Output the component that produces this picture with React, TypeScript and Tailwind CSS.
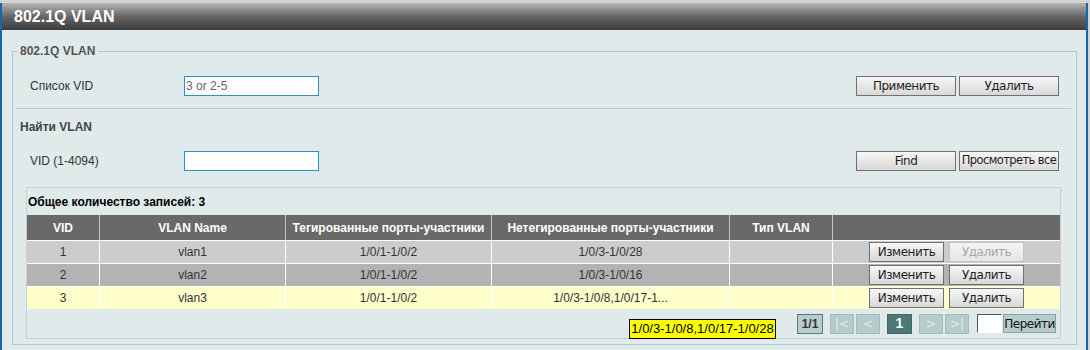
import React from "react";

const arial = "font-['Liberation_Sans',Arial,sans-serif]";
const tahoma = "font-['DejaVu_Sans',Tahoma,sans-serif]";

const btn =
  "h-[20px] w-[100px] border border-[#707070] bg-gradient-to-b from-[#f7f7f7] to-[#d8d8d8] text-[12px] text-[#1e1e1e] tracking-[-0.5px] leading-none flex items-center justify-center font-['DejaVu_Sans',Tahoma,sans-serif]";
const rowBtn =
  "h-[20px] w-[75px] border border-[#707070] bg-gradient-to-b from-[#f7f7f7] to-[#d8d8d8] text-[12px] text-[#1e1e1e] tracking-[-0.5px] leading-none flex items-center justify-center font-['DejaVu_Sans',Tahoma,sans-serif]";
const rowBtnDisabled =
  "h-[20px] w-[75px] border border-[#c4c4c4] bg-gradient-to-b from-[#f3f3f3] to-[#e6e6e6] text-[12px] text-[#a8a8a8] tracking-[-0.5px] leading-none flex items-center justify-center font-['DejaVu_Sans',Tahoma,sans-serif]";

type Row = {
  vid: string;
  name: string;
  tagged: string;
  untagged: string;
  type: string;
  bg: string;
  disabled?: boolean;
};

const rows: Row[] = [
  { vid: "1", name: "vlan1", tagged: "1/0/1-1/0/2", untagged: "1/0/3-1/0/28", type: "", bg: "bg-[#cccccc]", disabled: true },
  { vid: "2", name: "vlan2", tagged: "1/0/1-1/0/2", untagged: "1/0/3-1/0/16", type: "", bg: "bg-[#b3b3b3]" },
  { vid: "3", name: "vlan3", tagged: "1/0/1-1/0/2", untagged: "1/0/3-1/0/8,1/0/17-1...", type: "", bg: "bg-[#ffffcc]" },
];

const cell = "flex items-center justify-center h-full";

export default function App() {
  return (
    <div className={`w-[1090px] h-[350px] overflow-hidden bg-[#d4d4d4] ${arial}`}>
      <div className="mt-[3px] w-[1088px] h-[347px] border-x-2 border-[#1766a6] bg-[#e1eaea] flex flex-col">
        {/* Title bar */}
        <div className="h-[27px] shrink-0 bg-gradient-to-b from-[#b8b8b8] via-[#666666] to-[#3c3c3c] flex items-center pl-[12px]">
          <span className="text-white font-bold text-[16px] leading-none">802.1Q VLAN</span>
        </div>

        <fieldset className="mt-[14px] ml-[10px] mr-[9px] border border-[#b3c9c9] pb-[5px]">
          <legend className="ml-[4px] px-[3px] text-[12px] leading-[14px] font-bold text-[#555]">802.1Q VLAN</legend>

          {/* VID list row */}
          <div className="mt-[18px] flex items-center h-[20px] pr-[17px]">
            <div className="w-[171px] pl-[17px] text-[12px] text-[#333]">Список VID</div>
            <div className="w-[135px] h-[20px] border border-[#2f8fc2] bg-white flex items-center pl-[1px] text-[12px] text-[#666]">
              3 or 2-5
            </div>
            <div className="ml-auto flex gap-[3px]">
              <button className={btn}>Применить</button>
              <button className={btn}>Удалить</button>
            </div>
          </div>

          <div className="mt-[12px] ml-[3px] mr-[5px] h-px bg-[#b6cdcd]" />

          <div className="mt-[11px] pl-[7px] text-[12px] leading-[14px] font-bold text-[#444]">Найти VLAN</div>

          {/* Find row */}
          <div className="mt-[17px] flex items-center h-[20px] pr-[17px]">
            <div className="w-[171px] pl-[17px] text-[12px] text-[#333]">VID (1-4094)</div>
            <div className="w-[135px] h-[20px] border border-[#2f8fc2] bg-white" />
            <div className="ml-auto flex gap-[3px]">
              <button className={btn}>Find</button>
              <button className="h-[20px] w-[100px] border border-[#707070] bg-gradient-to-b from-[#f7f7f7] to-[#d8d8d8] text-[11.5px] text-[#1e1e1e] tracking-[-0.6px] leading-none flex items-center justify-center font-['DejaVu_Sans',Tahoma,sans-serif]">
                Просмотреть все
              </button>
            </div>
          </div>

          {/* Table box */}
          <div className="relative mt-[16px] ml-[13px] mr-[15px] border border-[#c7cfcf]">
            <div className="h-[27px] flex items-center pl-[1px] text-[12px] font-bold text-black">
              Общее количество записей: 3
            </div>
            <div className="flex h-[25px] bg-[#696969] text-white font-bold text-[12px]">
              <div className={`${cell} w-[72px]`}>VID</div>
              <div className={`${cell} w-[186px] border-l border-[#c2c2c2]`}>VLAN Name</div>
              <div className={`${cell} w-[206px] border-l border-[#c2c2c2]`}>Тегированные порты-участники</div>
              <div className={`${cell} w-[238px] border-l border-[#c2c2c2]`}>Нетегированные порты-участники</div>
              <div className={`${cell} w-[103px] border-l border-[#c2c2c2]`}>Тип VLAN</div>
              <div className={`${cell} w-[228px] border-l border-[#c2c2c2]`} />
            </div>
            {rows.map((r) => (
              <div key={r.vid} className={`flex h-[23px] border-t border-white ${r.bg} text-[12px] text-[#333]`}>
                <div className={`${cell} w-[72px]`}>{r.vid}</div>
                <div className={`${cell} w-[186px] border-l border-white`}>{r.name}</div>
                <div className={`${cell} w-[206px] border-l border-white`}>{r.tagged}</div>
                <div className={`${cell} w-[238px] border-l border-white`}>{r.untagged}</div>
                <div className={`${cell} w-[103px] border-l border-white`}>{r.type}</div>
                <div className={`${cell} w-[228px] border-l border-white gap-[5px]`}>
                  <button className={rowBtn}>Изменить</button>
                  <button className={r.disabled ? rowBtnDisabled : rowBtn}>Удалить</button>
                </div>
              </div>
            ))}

            {/* Pagination */}
            <div className="h-[29px] flex items-center justify-end pr-[4px]">
              <div className="w-[26px] h-[20px] border border-[#5b7a7a] bg-[#b8cccc] flex items-center justify-center text-[12px] font-bold text-[#333]">
                1/1
              </div>
              <div className={`ml-[7px] w-[24px] h-[20px] border border-[#a3bcbc] bg-[#b6cbcb] flex items-center justify-center text-[12px] text-[#e6eeee] ${tahoma}`}>|&lt;</div>
              <div className={`ml-[2px] w-[24px] h-[20px] border border-[#a3bcbc] bg-[#b6cbcb] flex items-center justify-center text-[12px] text-[#e6eeee] ${tahoma}`}>&lt;</div>
              <div className="ml-[7px] w-[25px] h-[20px] border border-[#3f6868] bg-[#4c7777] flex items-center justify-center text-[14px] font-bold text-white">
                1
              </div>
              <div className={`ml-[7px] w-[24px] h-[20px] border border-[#a3bcbc] bg-[#b6cbcb] flex items-center justify-center text-[12px] text-[#e6eeee] ${tahoma}`}>&gt;</div>
              <div className={`ml-[2px] w-[24px] h-[20px] border border-[#a3bcbc] bg-[#b6cbcb] flex items-center justify-center text-[12px] text-[#e6eeee] ${tahoma}`}>&gt;|</div>
              <div className="ml-[8px] w-[25px] h-[19px] bg-white border border-t-[#555] border-l-[#555] border-r-white border-b-white" />
              <div className={`ml-[1px] w-[53px] h-[19px] border border-[#84a3a3] bg-[#b8cccc] flex items-center justify-center text-[12px] text-[#111] tracking-[-0.5px] ${tahoma}`}>
                Перейти
              </div>
            </div>

            {/* Tooltip */}
            <div className="absolute left-[602px] top-[131px] h-[20px] w-[147px] border border-black bg-[#ffff00] flex items-center justify-center text-[13px] text-black whitespace-nowrap">
              1/0/3-1/0/8,1/0/17-1/0/28
            </div>
          </div>
        </fieldset>
      </div>
    </div>
  );
}
